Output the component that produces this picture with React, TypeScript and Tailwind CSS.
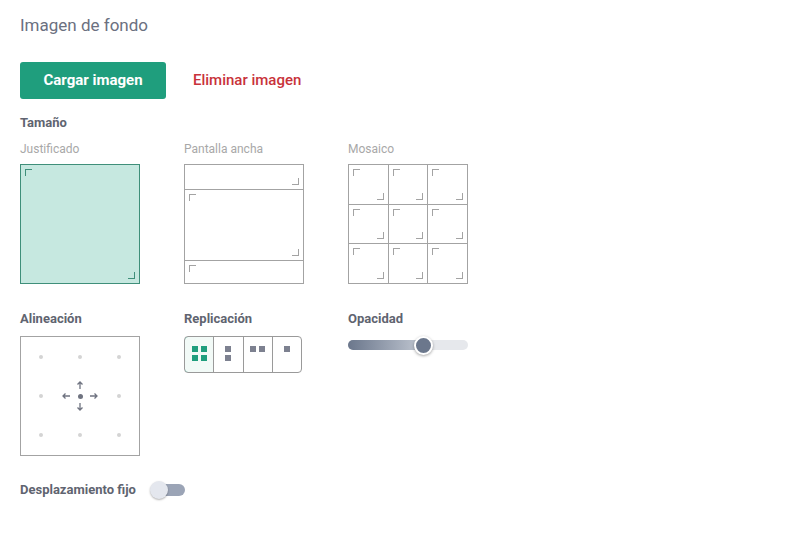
import React, { useState } from 'react';

const Corner: React.FC<{ pos: 'tl' | 'br'; color?: string }> = ({ pos, color = 'border-[#a3a3a3]' }) => (
  <span
    className={`absolute w-[7px] h-[7px] ${color} ${
      pos === 'tl' ? 'top-[4px] left-[4px] border-t border-l' : 'bottom-[4px] right-[4px] border-b border-r'
    }`}
  />
);

const Cell: React.FC<{ className?: string; tl?: boolean; br?: boolean }> = ({ className = '', tl, br }) => (
  <div className={`relative ${className}`}>
    {tl && <Corner pos="tl" />}
    {br && <Corner pos="br" />}
  </div>
);

const Sq: React.FC<{ on?: boolean }> = ({ on }) => (
  <span className={`block w-[6px] h-[6px] ${on ? 'bg-[#1f9e7d]' : 'bg-[#7d8190]'}`} />
);

const App: React.FC = () => {
  const [size, setSize] = useState('just');
  const [rep, setRep] = useState(0);
  const [fixed, setFixed] = useState(false);

  const dot = <span className="w-[4px] h-[4px] rounded-full bg-[#d4d4d4]" />;

  return (
    <div className="w-[800px] h-[535px] bg-white px-5 pt-[14px] font-['Roboto',sans-serif] text-[#5f6470]">
      <h1 className="text-[17px] leading-[22px] text-[#6b7080]">Imagen de fondo</h1>

      <div className="flex items-center gap-[27px] mt-[26px]">
        <button className="w-[146px] h-[37px] rounded-[3px] bg-[#1f9e7d] text-white text-[15px] font-bold">
          Cargar imagen
        </button>
        <button className="text-[15px] font-medium text-[#c8323a]">Eliminar imagen</button>
      </div>

      <div className="mt-[15px] text-[13px] font-bold text-[#5f6470] leading-[18px]">Tamaño</div>

      <div className="flex gap-[44px] mt-[9px]">
        <div className="w-[120px]">
          <div className="text-[12px] text-[#a8a8a8] leading-[16px]">Justificado</div>
          <div
            onClick={() => setSize('just')}
            className={`relative mt-[7px] w-[120px] h-[120px] border ${
              size === 'just' ? 'border-[#3f8f7a] bg-[#c6e8e0]' : 'border-[#a3a3a3] bg-white'
            }`}
          >
            <Corner pos="tl" color={size === 'just' ? 'border-[#3f8f7a]' : 'border-[#a3a3a3]'} />
            <Corner pos="br" color={size === 'just' ? 'border-[#3f8f7a]' : 'border-[#a3a3a3]'} />
          </div>
        </div>

        <div className="w-[120px]">
          <div className="text-[12px] text-[#a8a8a8] leading-[16px]">Pantalla ancha</div>
          <div
            onClick={() => setSize('wide')}
            className="mt-[7px] w-[120px] h-[120px] border border-[#a3a3a3] flex flex-col"
          >
            <Cell className="h-[25px] border-b border-[#a3a3a3]" br />
            <Cell className="flex-1 border-b border-[#a3a3a3]" tl br />
            <Cell className="h-[22px]" tl />
          </div>
        </div>

        <div className="w-[120px]">
          <div className="text-[12px] text-[#a8a8a8] leading-[16px]">Mosaico</div>
          <div
            onClick={() => setSize('tile')}
            className="mt-[7px] w-[120px] h-[120px] border border-[#a3a3a3] grid grid-cols-3 grid-rows-3 gap-px bg-[#a3a3a3]"
          >
            {Array.from({ length: 9 }).map((_, i) => (
              <Cell key={i} className="bg-white" tl br />
            ))}
          </div>
        </div>
      </div>

      <div className="flex gap-[44px] mt-[26px]">
        <div className="w-[120px]">
          <div className="text-[13px] font-bold leading-[18px]">Alineación</div>
          <div className="mt-[8px] w-[120px] h-[120px] border border-[#a3a3a3] grid grid-cols-3 grid-rows-3 place-items-center">
            {dot}
            {dot}
            {dot}
            {dot}
            <div className="relative w-[40px] h-[40px] flex items-center justify-center">
              <span className="w-[5px] h-[5px] rounded-full bg-[#6f7380]" />
              <svg className="absolute inset-0" width="40" height="40" viewBox="0 0 40 40" fill="none" stroke="#6f7380" strokeWidth="1.3">
                <path d="M20 13V6M17.5 8.5L20 6L22.5 8.5" />
                <path d="M20 27V34M17.5 31.5L20 34L22.5 31.5" />
                <path d="M10 20H3M5.5 17.5L3 20L5.5 22.5" />
                <path d="M30 20H37M34.5 17.5L37 20L34.5 22.5" />
              </svg>
            </div>
            {dot}
            {dot}
            {dot}
            {dot}
          </div>
        </div>

        <div className="w-[120px]">
          <div className="text-[13px] font-bold leading-[18px]">Replicación</div>
          <div className="mt-[8px] w-[118px] h-[37px] flex rounded-[4px] border border-[#9a9a9a] overflow-hidden">
            {[0, 1, 2, 3].map((i) => (
              <button
                key={i}
                onClick={() => setRep(i)}
                className={`flex-1 flex items-start justify-center pt-[9px] ${i > 0 ? 'border-l border-[#9a9a9a]' : ''} ${
                  rep === i ? 'bg-[#f2faf7] outline outline-1 outline-[#3f8f7a] rounded-l-[3px]' : ''
                }`}
              >
                {i === 0 && (
                  <span className="grid grid-cols-2 gap-[3px]">
                    <Sq on={rep === 0} />
                    <Sq on={rep === 0} />
                    <Sq on={rep === 0} />
                    <Sq on={rep === 0} />
                  </span>
                )}
                {i === 1 && (
                  <span className="grid grid-cols-1 gap-[3px]">
                    <Sq on={rep === 1} />
                    <Sq on={rep === 1} />
                  </span>
                )}
                {i === 2 && (
                  <span className="flex gap-[3px]">
                    <Sq on={rep === 2} />
                    <Sq on={rep === 2} />
                  </span>
                )}
                {i === 3 && <Sq on={rep === 3} />}
              </button>
            ))}
          </div>
        </div>

        <div className="w-[120px]">
          <div className="text-[13px] font-bold leading-[18px]">Opacidad</div>
          <div className="relative mt-[8px] w-[120px] h-[18px] flex items-center">
            <div className="w-full h-[10px] rounded-full bg-[#e6e8ec] overflow-hidden">
              <div className="h-full w-[63%] bg-gradient-to-r from-[#6b778c] to-[#c3c9d3]" />
            </div>
            <span className="absolute left-[66px] top-0 w-[19px] h-[19px] rounded-full bg-[#6b778c] border-2 border-white shadow-[0_1px_3px_rgba(0,0,0,0.35)]" />
          </div>
        </div>
      </div>

      <div className="flex items-center mt-[25px] gap-[14px]">
        <span className="text-[13px] font-bold leading-[18px]">Desplazamiento fijo</span>
        <button onClick={() => setFixed(!fixed)} className="relative w-[36px] h-[18px] flex items-center">
          <span className={`ml-[4px] w-[31px] h-[12px] rounded-full ${fixed ? 'bg-[#1f9e7d]' : 'bg-[#9ba4b6]'}`} />
          <span
            className={`absolute top-0 w-[18px] h-[18px] rounded-full bg-[#e4e7ee] shadow-[0_1px_2px_rgba(0,0,0,0.3)] ${
              fixed ? 'left-[18px]' : 'left-0'
            }`}
          />
        </button>
      </div>
    </div>
  );
};

export default App;
